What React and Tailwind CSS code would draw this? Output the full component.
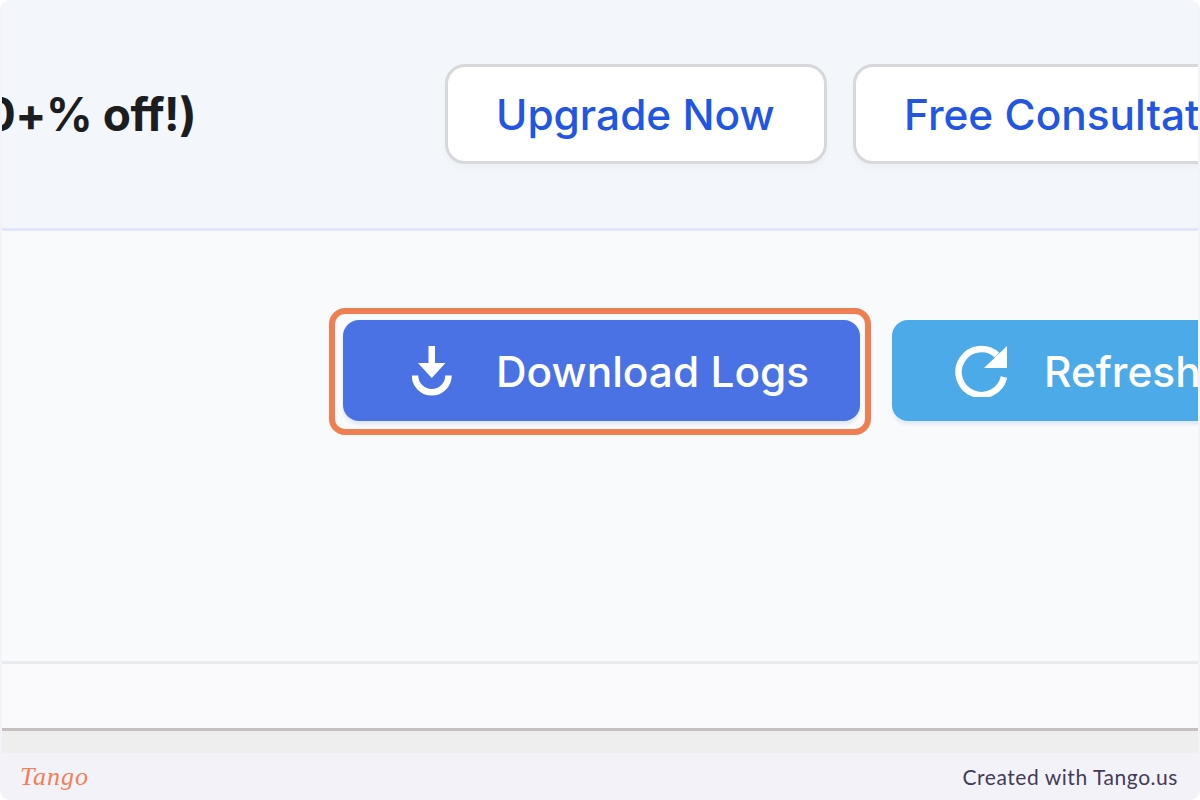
import React from 'react'

const DownloadIcon = () => (
  <svg viewBox="0 0 40 50" className="w-10 h-[50px] shrink-0" fill="none">
    <rect x="16.5" y="0" width="6.5" height="20" fill="#fff" />
    <path d="M6 17H33.5L19.75 32Z" fill="#fff" />
    <path d="M3 29.5A16.7 16.7 0 0 0 36.5 29.5" stroke="#fff" strokeWidth="6.5" />
  </svg>
)

const RefreshIcon = () => (
  <svg viewBox="0 0 52 52" className="w-[52px] h-[52px] shrink-0" fill="none">
    <path d="M42 10A23 23 0 1 0 49 32" stroke="#fff" strokeWidth="6.5" />
    <path d="M52 1V23H29Z" fill="#fff" />
  </svg>
)

const OutlineButton = ({ label, className }) => (
  <div className={`h-[100px] shrink-0 flex items-center pt-[2px] bg-white border-[3px] border-[#d7d8da] rounded-[20px] shadow-[0_5px_4px_#eef1f7] text-[42.4px] font-[450] text-[#2256e2] whitespace-nowrap ${className}`}>
    {label}
  </div>
)

export default function App() {
  return (
    <div className="w-[1200px] h-[800px] bg-white font-['Inter',sans-serif]">
      <div className="h-full flex flex-col bg-[#f3f2f8] px-[2px] rounded-[10px] overflow-hidden">
        <header className="h-[231px] shrink-0 flex items-start bg-[#f3f6fa] border-b-[3px] border-[#e0e7fb] overflow-hidden pt-[64px]">
          <div className="w-[194px] h-[100px] shrink-0 flex items-center justify-end overflow-hidden whitespace-nowrap text-[46px] font-bold tracking-[-0.5px] text-[#1c1d20]">
            (50+% off!)
          </div>
          <OutlineButton label="Upgrade Now" className="ml-[249px] w-[382px] pl-[48px]" />
          <OutlineButton label="Free Consultation" className="ml-[26px] pl-[48px] pr-[49px]" />
        </header>

        <main className="h-[430px] shrink-0 flex items-start bg-[#f9fafc] overflow-hidden pt-[89px] pl-[341px]">
          <div className="relative shrink-0">
            <button className="w-[517px] h-[101px] flex items-center pl-[69px] gap-[44px] bg-[#4a72e4] rounded-[16px] shadow-[0_4px_3px_#e4ebf8] text-[42.4px] font-[450] text-white whitespace-nowrap">
              <DownloadIcon />
              <span className="pt-[2px]">Download Logs</span>
            </button>
            <div className="absolute -left-[14px] -top-[12px] w-[542px] h-[127px] border-[6px] border-[#ef7f52] rounded-[16px]" />
          </div>
          <button className="ml-[32px] w-[420px] h-[101px] shrink-0 flex items-center pl-[63px] gap-[37px] bg-[#4daae9] rounded-[16px] shadow-[0_4px_3px_#e4ebf8] text-[42.4px] font-[450] text-white whitespace-nowrap">
            <RefreshIcon />
            <span className="pt-[2px]">Refresh</span>
          </button>
        </main>

        <div className="h-[67px] shrink-0 bg-[#fafafd] border-t-[3px] border-[#e9eaee]" />
        <div className="h-[25px] shrink-0 bg-[#eeeeee] border-t-[3px] border-[#c5c0c0]" />

        <footer className="flex-1 flex items-center justify-between pl-[18px] pr-[20px]">
          <span className="font-['Liberation_Serif',serif] italic text-[26px] text-[#f27f58] tracking-[1px]">Tango</span>
          <span className="font-['Lato',sans-serif] text-[21px] tracking-[0.55px] text-[#433b58]">Created with Tango.us</span>
        </footer>
      </div>
    </div>
  )
}
